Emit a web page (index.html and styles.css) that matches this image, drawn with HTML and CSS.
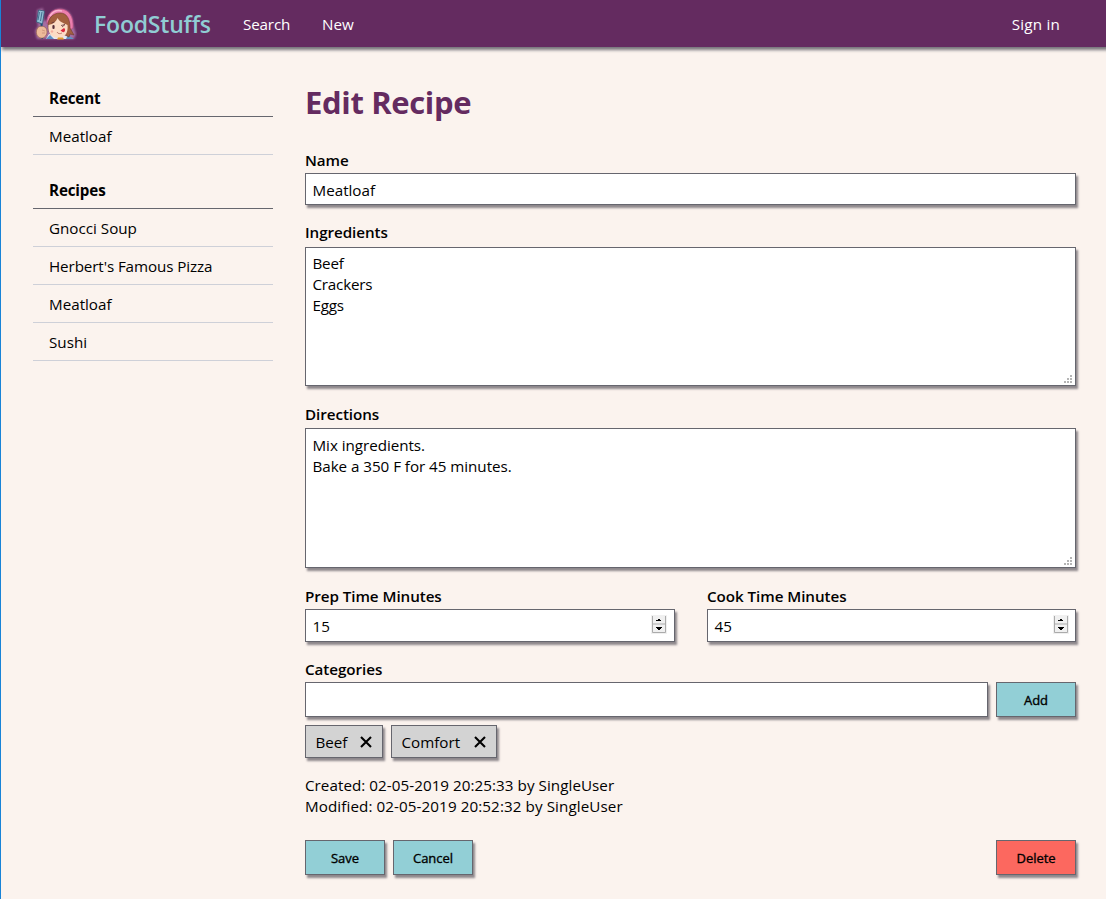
FILE: index.html
```html
<!DOCTYPE html>
<html lang="en">
<head>
<meta charset="utf-8">
<title>FoodStuffs</title>
<link rel="stylesheet" href="styles.css">
</head>
<body>
<header class="nav">
  <svg class="logo" width="44" height="36" viewBox="0 0 44 36">
    <defs><filter id="glow" x="-20%" y="-20%" width="140%" height="140%"><feGaussianBlur stdDeviation="1.300"/></filter></defs>
    <path d="M4 4l6-2 1 13 4-1C17 6 22 2 29 3c8 1 11 8 11 15l3 10-2 5H4l-2-8 3-5-1-5z" fill="#c893c4" opacity=".65" filter="url(#glow)"/>
    <path d="M13 33l3-5 6 1h10l8 4z" fill="#e4e9f3"/>
    <path d="M13 33l4-4 4 4zM33 33l2-4 6 4z" fill="#5f91c4"/>
    <path d="M14 18C13 9 19 3 27 3c9 0 14 8 13 19l-3 2-4-12-15-1z" fill="#ec7fae" stroke="#b84f83" stroke-width=".8"/>
    <path d="M17 10c3-5 8-6 12-5" fill="none" stroke="#f8b3cf" stroke-width="1.500"/>
    <path d="M15 20c0-8 5-13 12-13 7 0 10 6 10 15l4 7-4-1-1 3-4-2H19c-3-2-4-5-4-9z" fill="#a3603f" stroke="#713b2d" stroke-width=".6"/>
    <path d="M15.500 19c5-1 8-4 9-7 2 4 6 5 10 7 1 8-3 13-9 13-7 0-11-5-10-13z" fill="#fcdcc5"/>
    <path d="M20.500 20v2" stroke="#552e38" stroke-width="2.200" stroke-linecap="round"/>
    <path d="M28 19.500l4-1-3 2.500M18.500 17l3-1" fill="none" stroke="#64363a" stroke-width=".8"/>
    <path d="M27.500 24.500l3.500-2.500c2 1 1 5-1.500 4z" fill="#da273d"/>
    <path d="M24 26c1 2 3 2 5 1" fill="none" stroke="#9a4740" stroke-width=".6"/>
    <circle cx="19" cy="25.500" r="1.200" fill="#f5ae9e"/>
    <path d="M25 31.500h5l1 2h-7z" fill="#e39b2d"/>
    <path d="M8.500 17l.500 16" stroke="#174d79" stroke-width="2"/>
    <path d="M5.500 4l6 1-2 13-6-2z" fill="#91bed4" stroke="#315574" stroke-width=".8"/>
    <path d="M6.500 6L5 14M9 6L7.500 15" stroke="#3a6789" stroke-width=".9"/>
    <path d="M4 23c1-3 6-4 9-1 2 4 1 8-3 10-5 1-8-4-6-9z" fill="#edba9a" stroke="#95604f" stroke-width=".7"/>
    <path d="M9 24l3 1M9 27h3" stroke="#bf8168" stroke-width=".6"/>
  </svg>
  <a class="brand">FoodStuffs</a>
  <a class="nav-link search-link">Search</a>
  <a class="nav-link new-link">New</a>
  <a class="nav-link sign-in">Sign in</a>
</header>
<div class="page">
  <aside class="sidebar">
    <ul class="list">
      <li class="list-head">Recent</li>
      <li>Meatloaf</li>
    </ul>
    <ul class="list">
      <li class="list-head">Recipes</li>
      <li>Gnocci Soup</li>
      <li class="long-item">Herbert's Famous Pizza</li>
      <li>Meatloaf</li>
      <li>Sushi</li>
    </ul>
  </aside>
  <main class="main">
    <h1 class="title">Edit Recipe</h1>
    <label class="label">Name</label>
    <div class="box name-box">Meatloaf</div>
    <label class="label ingredients-label">Ingredients</label>
    <div class="box area ingredients">Beef<br>Crackers<br>Eggs
      <svg class="grip" width="8" height="8" fill="#b5b5b5"><path d="M6 0h2v2H6zM3 3h2v2H3zM6 3h2v2H6zM0 6h2v2H0zM3 6h2v2H3zM6 6h2v2H6z"/></svg>
    </div>
    <label class="label directions-label">Directions</label>
    <div class="box area directions">Mix ingredients.<br>Bake a 350 F for 45 minutes.
      <svg class="grip" width="8" height="8" fill="#b5b5b5"><path d="M6 0h2v2H6zM3 3h2v2H3zM6 3h2v2H6zM0 6h2v2H0zM3 6h2v2H3zM6 6h2v2H6z"/></svg>
    </div>
    <div class="times">
      <div>
        <label class="label">Prep Time Minutes</label>
        <div class="box number">15
          <svg class="spinner" width="16" height="19"><path fill="#f0f0f0" d="M0 0h16v19H0z"/><path d="M1.500 1v16.500h13V1M1 9h14" fill="none" stroke="#ababab"/><path d="M7 4h2v1h1v1H5V5h2zM5 12h6v1h-1v1H9v1H7v-1H6v-1H5z" fill="#000"/></svg>
        </div>
      </div>
      <div>
        <label class="label">Cook Time Minutes</label>
        <div class="box number">45
          <svg class="spinner spinner-cook" width="16" height="19"><path fill="#f0f0f0" d="M0 0h16v19H0z"/><path d="M1.500 1v16.500h13V1M1 9h14" fill="none" stroke="#ababab"/><path d="M7 4h2v1h1v1H5V5h2zM5 12h6v1h-1v1H9v1H7v-1H6v-1H5z" fill="#000"/></svg>
        </div>
      </div>
    </div>
    <label class="label categories-label">Categories</label>
    <div class="row">
      <div class="box category-input"></div>
      <button class="btn">Add</button>
    </div>
    <div class="row chips">
      <div class="chip chip-beef"><span>Beef</span><svg width="12" height="12"><path d="M1 1l10 10M11 1L1 11" stroke="#000" stroke-width="2.100"/></svg></div>
      <div class="chip chip-comfort"><span>Comfort</span><svg width="12" height="12"><path d="M1 1l10 10M11 1L1 11" stroke="#000" stroke-width="2.100"/></svg></div>
    </div>
    <div class="meta"><div class="created">Created: 02-05-2019 20:25:33 by SingleUser</div><div class="modified">Modified: 02-05-2019 20:52:32 by SingleUser</div></div>
    <div class="row actions">
      <button class="btn">Save</button>
      <button class="btn">Cancel</button>
      <button class="btn danger">Delete</button>
    </div>
  </main>
</div>
</body>
</html>
```
FILE: styles.css
```css
* { box-sizing: border-box; }
body {
  margin: 0;
  height: 899px;
  overflow: hidden;
  border-left: 1px solid #1883d7;
  background: #fbf3ee;
  color: #000;
  font: 15.2px/21px "Open Sans", "Noto Sans", sans-serif;
}
.nav {
  display: flex;
  align-items: center;
  height: 47px;
  padding: 0 46px 0 32px;
  background: #642b60;
  color: #fff;
  box-shadow: 2px 2px 3px 1px #77757b;
}
.logo { flex: none; margin-top: 1px; }
.brand { width: 117px; margin: 0 32px 0 17px; color: #90cdd4; font-size: 23px; font-weight: 600; line-height: 32px; letter-spacing: -.2px; white-space: nowrap; }
.nav-link { padding-top: 2px; }
.search-link { width: 47px; margin-right: 32px; letter-spacing: -.15px; }
.sign-in { margin-left: auto; letter-spacing: .2px; }
.page { display: flex; gap: 32px; padding: 32px 30px 0 32px; }
.sidebar { width: 240px; flex: none; }
.list { list-style: none; margin: 0 0 16px; padding: 0; }
.list li { height: 38px; padding: 9px 16px 7px; border-bottom: 1px solid #ced0d8; }
.list .list-head { border-color: #66666e; font-weight: 700; letter-spacing: -.15px; }
.list .long-item { letter-spacing: -.1px; }
.main { flex: 1; }
.title { margin: 0; height: 71px; color: #642b60; font-size: 31px; line-height: 46px; font-weight: 700; letter-spacing: -.35px; }
.label { display: block; height: 21px; margin-bottom: 2px; font-weight: 600; letter-spacing: -.06px; }
.box {
  position: relative;
  border: 1px solid #66666e;
  background: #fff;
  padding: 6px 6.5px;
}
.box, .btn, .chip { box-shadow: 2px 3px 2px rgba(70, 65, 75, .6); }
.name-box { height: 32px; }
.ingredients-label { margin: 17px 0 4px; }
.ingredients { height: 139px; padding-top: 5px; letter-spacing: -.2px; }
.directions-label { margin: 18px 0 3px; }
.directions { height: 140px; letter-spacing: -.04px; }
.grip { position: absolute; right: 3px; bottom: 2px; }
.times { display: grid; grid-template-columns: 370px 369px; gap: 32px; margin-top: 18px; }
.number { height: 33px; }
.spinner { position: absolute; right: 7px; top: 5px; }
.spinner-cook { right: 6px; }
.categories-label { margin-top: 17px; }
.row { display: flex; gap: 8px; }
.category-input { flex: 1; height: 35px; }
.btn { width: 80px; height: 35px; padding: 1px 0 0; border: 1px solid #66666e; background: #92cfd6; color: #000; font: 400 13px "Open Sans", "Noto Sans", sans-serif; letter-spacing: -.05px; -webkit-text-stroke: .35px #000; }
.danger { margin-left: auto; background: #fc685f; }
.chips { margin-top: 8px; }
.chip { display: flex; align-items: center; justify-content: space-between; height: 33px; padding: 1px 10px 0 9.5px; border: 1px solid #66666e; background: #d3d3d3; }
.chip-beef { width: 78px; }
.chip-comfort { width: 106px; }
.meta { margin-top: 17px; }
.created { letter-spacing: .05px; }
.modified { letter-spacing: .09px; }
.actions { margin-top: 23px; }
```
